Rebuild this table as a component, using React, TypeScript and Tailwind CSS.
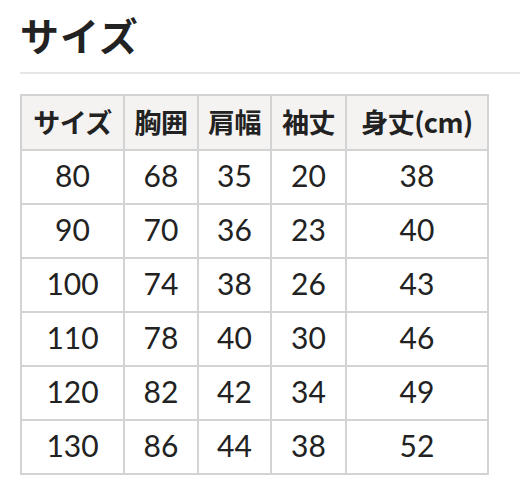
import React from 'react';

const headers = ['サイズ', '胸囲', '肩幅', '袖丈', '身丈(cm)'];

const rows = [
  [80, 68, 35, 20, 38],
  [90, 70, 36, 23, 40],
  [100, 74, 38, 26, 43],
  [110, 78, 40, 30, 46],
  [120, 82, 42, 34, 49],
  [130, 86, 44, 38, 52],
];

const colWidths = ['w-[103px]', 'w-[74px]', 'w-[73px]', 'w-[75px]', 'w-[142px]'];

const App = () => {
  return (
    <div
      className="min-h-screen bg-white pl-5 pt-[4px] text-[#222]"
      style={{ fontFamily: '"Noto Sans CJK JP", "Noto Sans", sans-serif' }}
    >
      {/* Title */}
      <h1 className="text-[39px] font-bold leading-[60px] tracking-[1px]">サイズ</h1>
      <div className="mt-[8px] h-[2px] bg-[#e6e6e6]" />

      {/* Size table */}
      <table className="mt-[20px] border-collapse">
        <thead>
          <tr className="h-[55px] bg-[#f4f3f2]">
            {headers.map((h, i) => (
              <th
                key={h}
                className={`${colWidths[i]} border-2 border-[#d3d3d3] p-0 pb-[3px] text-center text-[27px] font-bold leading-none tracking-[-0.5px]`}
              >
                {h}
              </th>
            ))}
          </tr>
        </thead>
        <tbody>
          {rows.map((row) => (
            <tr key={row[0]} className="h-[54px]">
              {row.map((v, i) => (
                <td
                  key={i}
                  className="border-2 border-[#d3d3d3] p-0 pb-[4px] text-center font-['Lato','Noto_Sans_CJK_JP',sans-serif] text-[30px] leading-none"
                >
                  {v}
                </td>
              ))}
            </tr>
          ))}
        </tbody>
      </table>
    </div>
  );
};

export default App;
